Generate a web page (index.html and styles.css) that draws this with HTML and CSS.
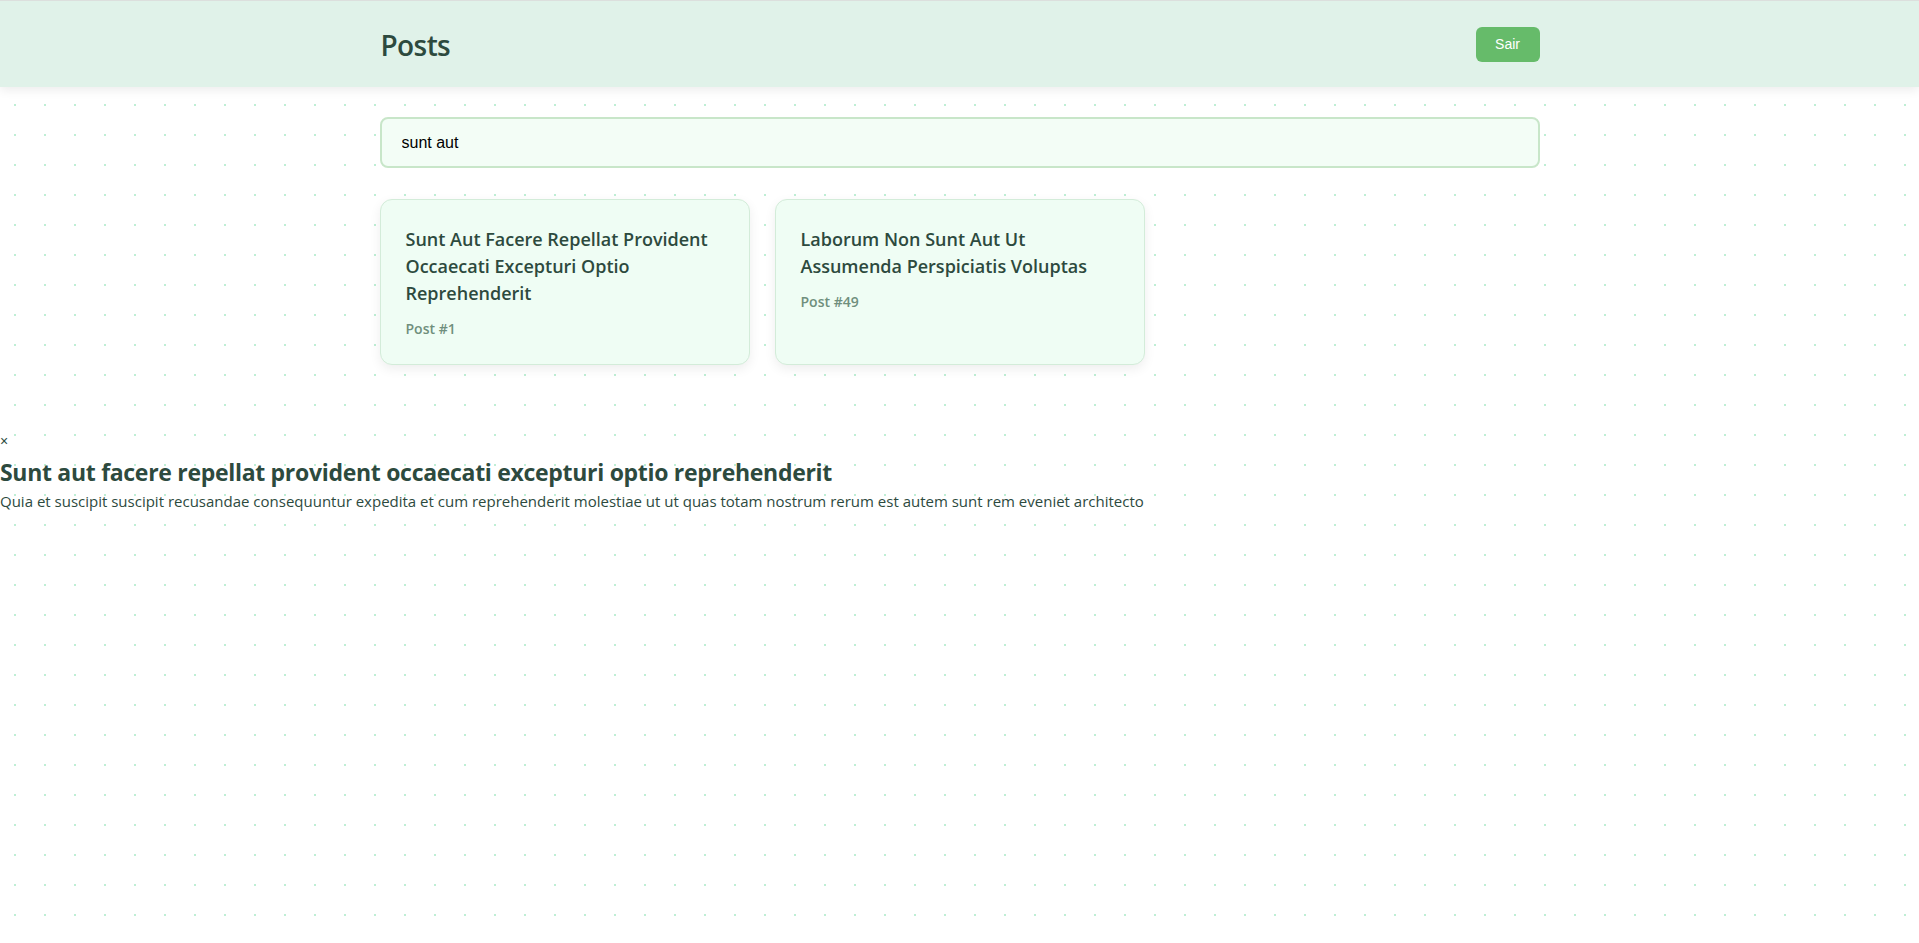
FILE: index.html
```html
<!DOCTYPE html>
<html lang="pt">
<head>
<meta charset="utf-8">
<title>Posts</title>
<link rel="stylesheet" href="styles.css">
</head>
<body>
<header class="topbar">
  <div class="topbar-inner">
    <h1 class="page-title">Posts</h1>
    <button class="logout">Sair</button>
  </div>
</header>
<main class="container">
  <input class="search" type="text" value="sunt aut">
  <div class="grid">
    <div class="card">
      <h3 class="card-title">Sunt Aut Facere Repellat Provident Occaecati Excepturi Optio Reprehenderit</h3>
      <p class="card-meta">Post #1</p>
    </div>
    <div class="card">
      <h3 class="card-title">Laborum Non Sunt Aut Ut Assumenda Perspiciatis Voluptas</h3>
      <p class="card-meta">Post #49</p>
    </div>
  </div>
</main>
<div class="modal">
  <span class="close">×</span>
  <h2 class="modal-title">Sunt aut facere repellat provident occaecati excepturi optio reprehenderit</h2>
  <p class="modal-body">Quia et suscipit suscipit recusandae consequuntur expedita et cum reprehenderit molestiae ut ut quas totam nostrum rerum est autem sunt rem eveniet architecto</p>
</div>
</body>
</html>
```
FILE: styles.css
```css
html, body {
  margin: 0;
  padding: 0;
}
body {
  font-family: "Open Sans", "Noto Sans", sans-serif;
  color: #2d4a3e;
  background-color: #ffffff;
  background-image: radial-gradient(circle at 15px 15px, #bfeed5 1px, transparent 1.5px);
  background-size: 30px 30px;
  min-height: 943px;
}
.topbar {
  background: #e0f2e9;
  border-top: 1px solid #dcdfdd;
  box-shadow: 0 3px 10px rgba(0, 0, 0, 0.08);
}
.topbar-inner {
  width: 1160px;
  margin: 0 auto;
  height: 86px;
  display: flex;
  align-items: center;
  justify-content: space-between;
}
.page-title {
  margin: 2px 0 0 1px;
  font-size: 28px;
  font-weight: 600;
  letter-spacing: -0.6px;
  color: #2d4a3e;
}
.logout {
  width: 64px;
  height: 35px;
  border: none;
  border-radius: 6px;
  background: #66bb6a;
  color: #ffffff;
  font-family: "Liberation Sans", Arial, sans-serif;
  font-size: 14px;
  cursor: pointer;
}
.container {
  width: 1160px;
  margin: 0 auto;
  padding: 30px 0 0;
}
.search {
  display: block;
  box-sizing: border-box;
  width: 100%;
  height: 51px;
  padding: 0 20px;
  border: 2px solid #c8e6c9;
  border-radius: 8px;
  background: #f3fdf6;
  font-family: "Liberation Sans", Arial, sans-serif;
  font-size: 16px;
  color: #000;
  outline: none;
}
.grid {
  margin-top: 31px;
  display: grid;
  grid-template-columns: repeat(3, 370px);
  gap: 25px;
}
.card {
  background: #effdf4;
  border: 1px solid #d3ecd9;
  border-radius: 12px;
  padding: 26px 24px 25px 25px;
  box-shadow: 0 4px 12px rgba(0, 0, 0, 0.07);
}
.card-title {
  margin: 0;
  font-size: 18px;
  font-weight: 600;
  line-height: 27px;
  color: #2d4a3e;
}
.card-meta {
  margin: 11px 0 0;
  font-size: 14px;
  font-weight: 600;
  line-height: 21px;
  color: #6f8f7d;
}
.modal {
  margin-top: 68px;
}
.close {
  display: block;
  font-family: "Liberation Sans", Arial, sans-serif;
  font-size: 14px;
  line-height: 16px;
  color: #2d4a3e;
}
.modal-title {
  margin: 7px 0 0;
  font-size: 23px;
  font-weight: 700;
  letter-spacing: -0.3px;
  line-height: 32px;
  color: #2d4a3e;
}
.modal-body {
  margin: 2px 0 0;
  font-size: 15px;
  line-height: 22px;
  color: #2d4a3e;
}
```
